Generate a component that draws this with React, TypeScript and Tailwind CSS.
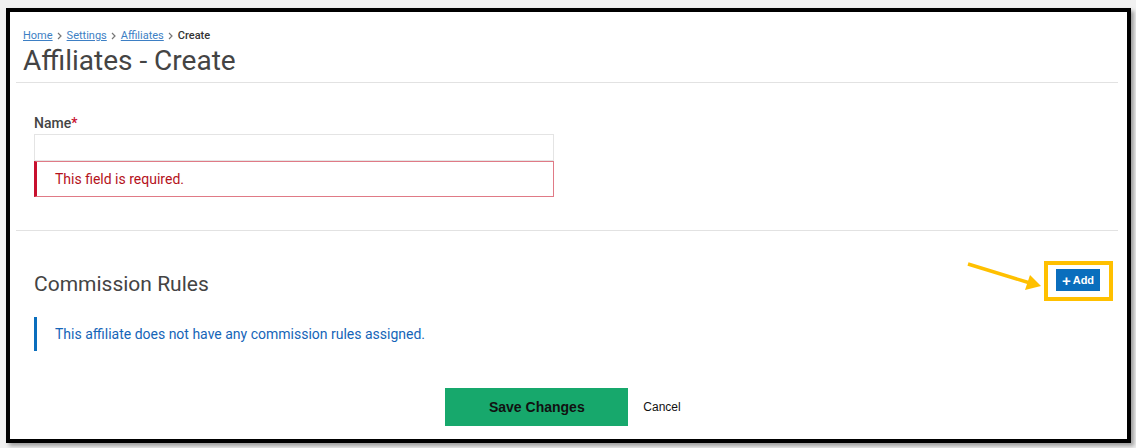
import React from "react";

export default function App() {
  return (
    <div className="h-[448px] w-[1136px] overflow-hidden bg-[#f1f1f1] pl-[6px] pt-[8px] font-['Roboto',sans-serif]">
      <div className="h-[435px] w-[1125px] border-4 border-black bg-white shadow-[3px_3px_4px_rgba(0,0,0,0.35)]">
        {/* header */}
        <div className="mx-[6px] mr-[9px] border-b border-[#e2e2e2] pb-[5px] pl-[7px] pt-[16px]">
          <nav className="flex items-center gap-[4px] text-[11px] leading-4">
            <a href="#" className="text-[#3d7fc4] underline">
              Home
            </a>
            <Sep />
            <a href="#" className="text-[#3d7fc4] underline">
              Settings
            </a>
            <Sep />
            <a href="#" className="text-[#3d7fc4] underline">
              Affiliates
            </a>
            <Sep />
            <span className="font-medium text-[#333]">Create</span>
          </nav>
          <h1 className="mt-px text-[28px] leading-8 font-normal text-[#444]">
            Affiliates - Create
          </h1>
        </div>

        {/* name field */}
        <div className="mx-[6px] mr-[9px] border-b border-[#e2e2e2] pb-[33px] pl-[18px] pt-[30px]">
          <label className="block text-[14px] leading-5 font-medium text-[#444]">
            Name<span className="text-[#c8102e]">*</span>
          </label>
          <input
            type="text"
            className="mt-px block h-[27px] w-[520px] border border-[#e4e4e4] px-2 text-sm outline-none"
          />
          <div className="flex h-[36px] w-[520px] items-center border border-l-[3px] border-[#e07a86] border-l-[#c8102e] pl-[18px] text-[14px] text-[#b5121b]">
            This field is required.
          </div>
        </div>

        {/* commission rules */}
        <div className="mx-[6px] mr-[9px] pl-[18px] pr-[18px] pt-[39px]">
          <div className="flex items-start justify-between">
            <h2 className="text-[21px] leading-7 text-[#444]">Commission Rules</h2>
            <div className="relative -mt-px">
              <button
                type="button"
                className="flex h-[22px] w-[44px] items-center justify-center gap-[2px] bg-[#0a6ebd] font-['Liberation_Sans',sans-serif] text-[11px] font-bold text-white"
              >
                <span className="text-[15px] leading-none">+</span>Add
              </button>
              <div className="pointer-events-none absolute -bottom-[10px] -left-[12px] -right-[13px] -top-[8px] border-4 border-[#ffc000]" />
              <svg
                className="pointer-events-none absolute -left-[92px] -top-[10px]"
                width="80"
                height="32"
                viewBox="0 0 80 32"
              >
                <line x1="4" y1="5" x2="66" y2="24" stroke="#ffc000" strokeWidth="3.5" />
                <polygon points="77,27 61,31 66,16" fill="#ffc000" />
              </svg>
            </div>
          </div>
          <div className="mt-[19px] flex h-[34px] items-center border-l-[3px] border-[#0a6ebd] pl-[18px] text-[14px] text-[#1565b8]">
            This affiliate does not have any commission rules assigned.
          </div>
        </div>

        {/* actions */}
        <div className="ml-[4px] mt-[37px] flex justify-center">
          <button
            type="button"
            className="h-[38px] w-[183px] bg-[#17a86c] font-['Liberation_Sans',sans-serif] text-[14px] font-bold text-[#111]"
          >
            Save Changes
          </button>
          <button
            type="button"
            className="px-[15px] font-['Liberation_Sans',sans-serif] text-[12px] text-[#111]"
          >
            Cancel
          </button>
        </div>
      </div>
    </div>
  );
}

function Sep() {
  return (
    <svg width="6" height="8" viewBox="0 0 6 8" className="text-[#777]">
      <path d="M1 1l3 3-3 3" fill="none" stroke="currentColor" strokeWidth="1.2" />
    </svg>
  );
}
